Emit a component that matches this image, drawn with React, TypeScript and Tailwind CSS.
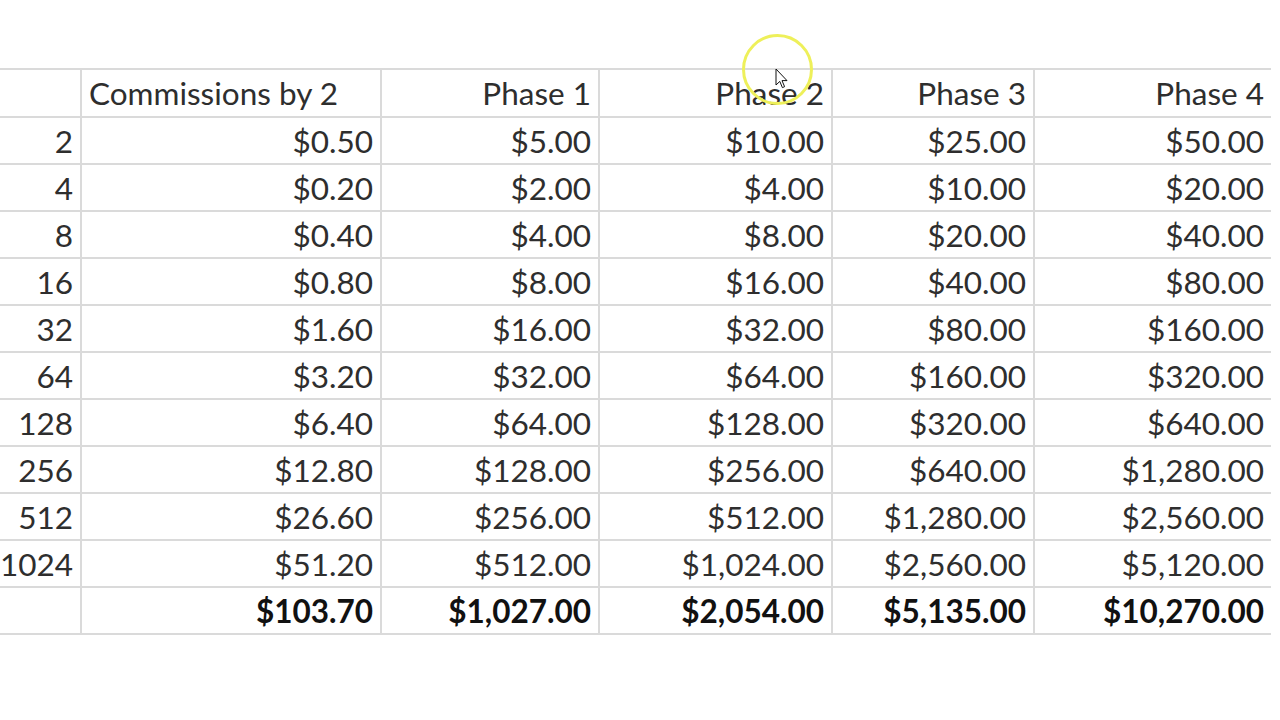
import React from "react";

const rows: string[][] = [
  ["2", "$0.50", "$5.00", "$10.00", "$25.00", "$50.00"],
  ["4", "$0.20", "$2.00", "$4.00", "$10.00", "$20.00"],
  ["8", "$0.40", "$4.00", "$8.00", "$20.00", "$40.00"],
  ["16", "$0.80", "$8.00", "$16.00", "$40.00", "$80.00"],
  ["32", "$1.60", "$16.00", "$32.00", "$80.00", "$160.00"],
  ["64", "$3.20", "$32.00", "$64.00", "$160.00", "$320.00"],
  ["128", "$6.40", "$64.00", "$128.00", "$320.00", "$640.00"],
  ["256", "$12.80", "$128.00", "$256.00", "$640.00", "$1,280.00"],
  ["512", "$26.60", "$256.00", "$512.00", "$1,280.00", "$2,560.00"],
  ["1024", "$51.20", "$512.00", "$1,024.00", "$2,560.00", "$5,120.00"],
];

const totals = ["", "$103.70", "$1,027.00", "$2,054.00", "$5,135.00", "$10,270.00"];
const headers = ["", "Phase 1", "Phase 2", "Phase 3", "Phase 4"];

const Cell = ({ children, last, bold, left, head }: { children?: React.ReactNode; last?: boolean; bold?: boolean; left?: boolean; head?: boolean }) => (
  <div
    className={`flex items-center pt-[2px] border-b-2 border-[#dadada] whitespace-nowrap ${head ? "h-[48px]" : "h-[47px]"} ${last ? "" : "border-r-2"} ${left ? "justify-start pl-[7px]" : "justify-end pr-[7px]"} ${bold ? "font-bold text-[#111]" : "text-[#2e2e2e]"}`}
  >
    {children}
  </div>
);

export default function App() {
  return (
    <div className="relative w-[1280px] h-[720px] bg-white overflow-hidden" style={{ fontFamily: "Lato, 'Open Sans', sans-serif" }}>
      <div className="pt-[68px]">
        <div className="w-[1271px] grid grid-cols-[82px_300px_218px_233px_202px_236px] border-t-2 border-[#dadada] text-[31.5px] leading-none">
          <Cell head />
          <Cell head left>Commissions by 2</Cell>
          {headers.slice(1).map((h, i) => (
            <Cell key={h} head last={i === 3}>{h}</Cell>
          ))}
          {rows.map((r) =>
            r.map((v, i) => (
              <Cell key={r[0] + "-" + i} last={i === 5}>{v}</Cell>
            ))
          )}
          {totals.map((v, i) => (
            <Cell key={"t" + i} bold last={i === 5}>{v}</Cell>
          ))}
        </div>
      </div>

      {/* click highlight + pointer */}
      <div className="absolute left-[742px] top-[34px] w-[71px] h-[71px] rounded-full border-[3px] border-[#eef05a]" />
      <svg className="absolute left-[775px] top-[68px]" width="14" height="22" viewBox="0 0 14 22">
        <path d="M1 1 L1 17 L4.8 13.4 L7.4 19.6 L9.6 18.7 L7 12.6 L12 12.6 Z" fill="#fff" stroke="#111" strokeWidth="1" strokeLinejoin="round" />
      </svg>
    </div>
  );
}
